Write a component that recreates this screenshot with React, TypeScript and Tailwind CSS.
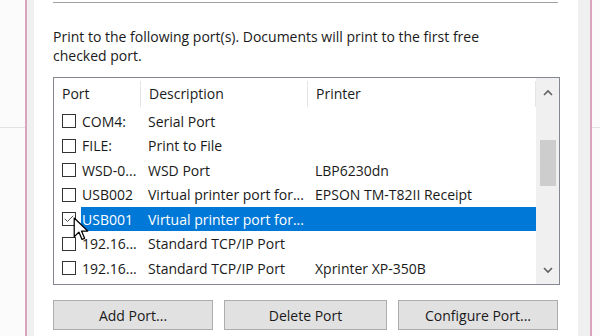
import { Check } from "lucide-react";

type Row = { port: string; desc: string; printer: string; checked?: boolean; selected?: boolean };

const rows: Row[] = [
  { port: "COM4:", desc: "Serial Port", printer: "" },
  { port: "FILE:", desc: "Print to File", printer: "" },
  { port: "WSD-0...", desc: "WSD Port", printer: "LBP6230dn" },
  { port: "USB002", desc: "Virtual printer port for...", printer: "EPSON TM-T82II Receipt" },
  { port: "USB001", desc: "Virtual printer port for...", printer: "", checked: true, selected: true },
  { port: "192.16...", desc: "Standard TCP/IP Port", printer: "" },
  { port: "192.16...", desc: "Standard TCP/IP Port", printer: "Xprinter XP-350B" },
];

function Checkbox({ checked }: { checked?: boolean }) {
  return (
    <span className="flex h-[14px] w-[14px] shrink-0 items-center justify-center border border-[#333] bg-white">
      {checked && <Check className="h-[12px] w-[12px] text-[#555]" strokeWidth={2} />}
    </span>
  );
}

function PortRow({ row }: { row: Row }) {
  return (
    <div className="flex h-[24.5px] items-center">
      <div className="flex w-[27px] shrink-0 justify-end pr-[5px]">
        <Checkbox checked={row.checked} />
      </div>
      <div
        className={`flex h-[24px] flex-1 items-center ${
          row.selected ? "bg-[#0078d7] text-white" : "text-[#1a1a1a]"
        }`}
      >
        <span className="w-[67px] shrink-0 overflow-hidden whitespace-nowrap pl-[1px]">{row.port}</span>
        <span className="w-[167px] shrink-0 whitespace-nowrap">{row.desc}</span>
        <span className="flex-1 whitespace-nowrap">{row.printer}</span>
      </div>
    </div>
  );
}

function Cursor() {
  return (
    <svg
      className="absolute left-[73px] top-[217px]"
      width="17"
      height="25"
      viewBox="0 0 16 24"
    >
      <path
        d="M1 1 L1 19 L5.5 14.5 L8.5 21.5 L11 20.5 L8 13.5 L14 13.5 Z"
        fill="white"
        stroke="black"
        strokeWidth="1.2"
        strokeLinejoin="round"
      />
    </svg>
  );
}

export default function App() {
  return (
    <div
      className="relative flex h-[336px] w-[600px] overflow-hidden bg-white text-[14px]"
      style={{ fontFamily: '"Open Sans", "Noto Sans", sans-serif' }}
    >
      <div className="flex w-[25px] shrink-0 flex-col bg-[#fbfbfb]">
        <div className="h-[128px] border-b border-[#e2e2e2]" />
      </div>
      <div className="w-[2px] shrink-0 bg-[#dca3bf]" />
      <div className="w-[7px] shrink-0 bg-[#f0f0f0]" />

      <div className="flex w-[544px] shrink-0 flex-col bg-white pl-[19px] pr-[18px]">
        <div className="mt-[2px] h-px w-[505px] bg-[#a0a0a0]" />
        <p className="mt-[24px] leading-[19px] text-[#1a1a1a]">
          Print to the following port(s). Documents will print to the first free
          <br />
          checked port.
        </p>

        <div className="mt-[12px] flex h-[208px] border border-[#828790]">
          <div className="flex flex-1 flex-col">
            <div className="flex h-[31px] items-center text-[#1a1a1a]">
              <span className="w-[86px] pl-[8px]">Port</span>
              <span className="h-[26px] w-px bg-[#e5e5e5]" />
              <span className="w-[166px] pl-[8px]">Description</span>
              <span className="h-[26px] w-px bg-[#e5e5e5]" />
              <span className="flex-1 pl-[8px]">Printer</span>
              <span className="h-[26px] w-px bg-[#e5e5e5]" />
            </div>
            <div className="flex flex-col">
              {rows.map((r, i) => (
                <PortRow key={i} row={r} />
              ))}
            </div>
          </div>
          <div className="flex w-[23px] shrink-0 flex-col items-center bg-[#f0f0f0]">
            <div className="flex h-[24px] items-center pt-[4px] text-[#606060]">
              <svg width="10" height="7" viewBox="0 0 10 7">
                <path d="M1 6 L5 2 L9 6" fill="none" stroke="currentColor" strokeWidth="1.6" />
              </svg>
            </div>
            <div className="mt-[38px] h-[46px] w-[16px] bg-[#cdcdcd]" />
            <div className="flex-1" />
            <div className="flex h-[24px] items-center pb-[4px] text-[#606060]">
              <svg width="10" height="7" viewBox="0 0 10 7">
                <path d="M1 1 L5 5 L9 1" fill="none" stroke="currentColor" strokeWidth="1.6" />
              </svg>
            </div>
          </div>
        </div>

        <div className="mt-[15px] flex gap-[11px] text-[14px] text-[#1a1a1a]">
          <button className="h-[30px] w-[160px] border border-[#adadad] bg-[#e1e1e1]">Add Port...</button>
          <button className="h-[30px] w-[163px] border border-[#adadad] bg-[#e1e1e1]">Delete Port</button>
          <button className="h-[30px] w-[160px] border border-[#adadad] bg-[#e1e1e1]">Configure Port...</button>
        </div>
      </div>

      <div className="w-[12px] shrink-0 bg-[#f0f0f0]" />
      <div className="w-[2px] shrink-0 bg-[#dca3bf]" />
      <div className="flex flex-1 flex-col bg-[#fbfbfb]">
        <div className="h-[128px] border-b border-[#e2e2e2]" />
      </div>

      <Cursor />
    </div>
  );
}
